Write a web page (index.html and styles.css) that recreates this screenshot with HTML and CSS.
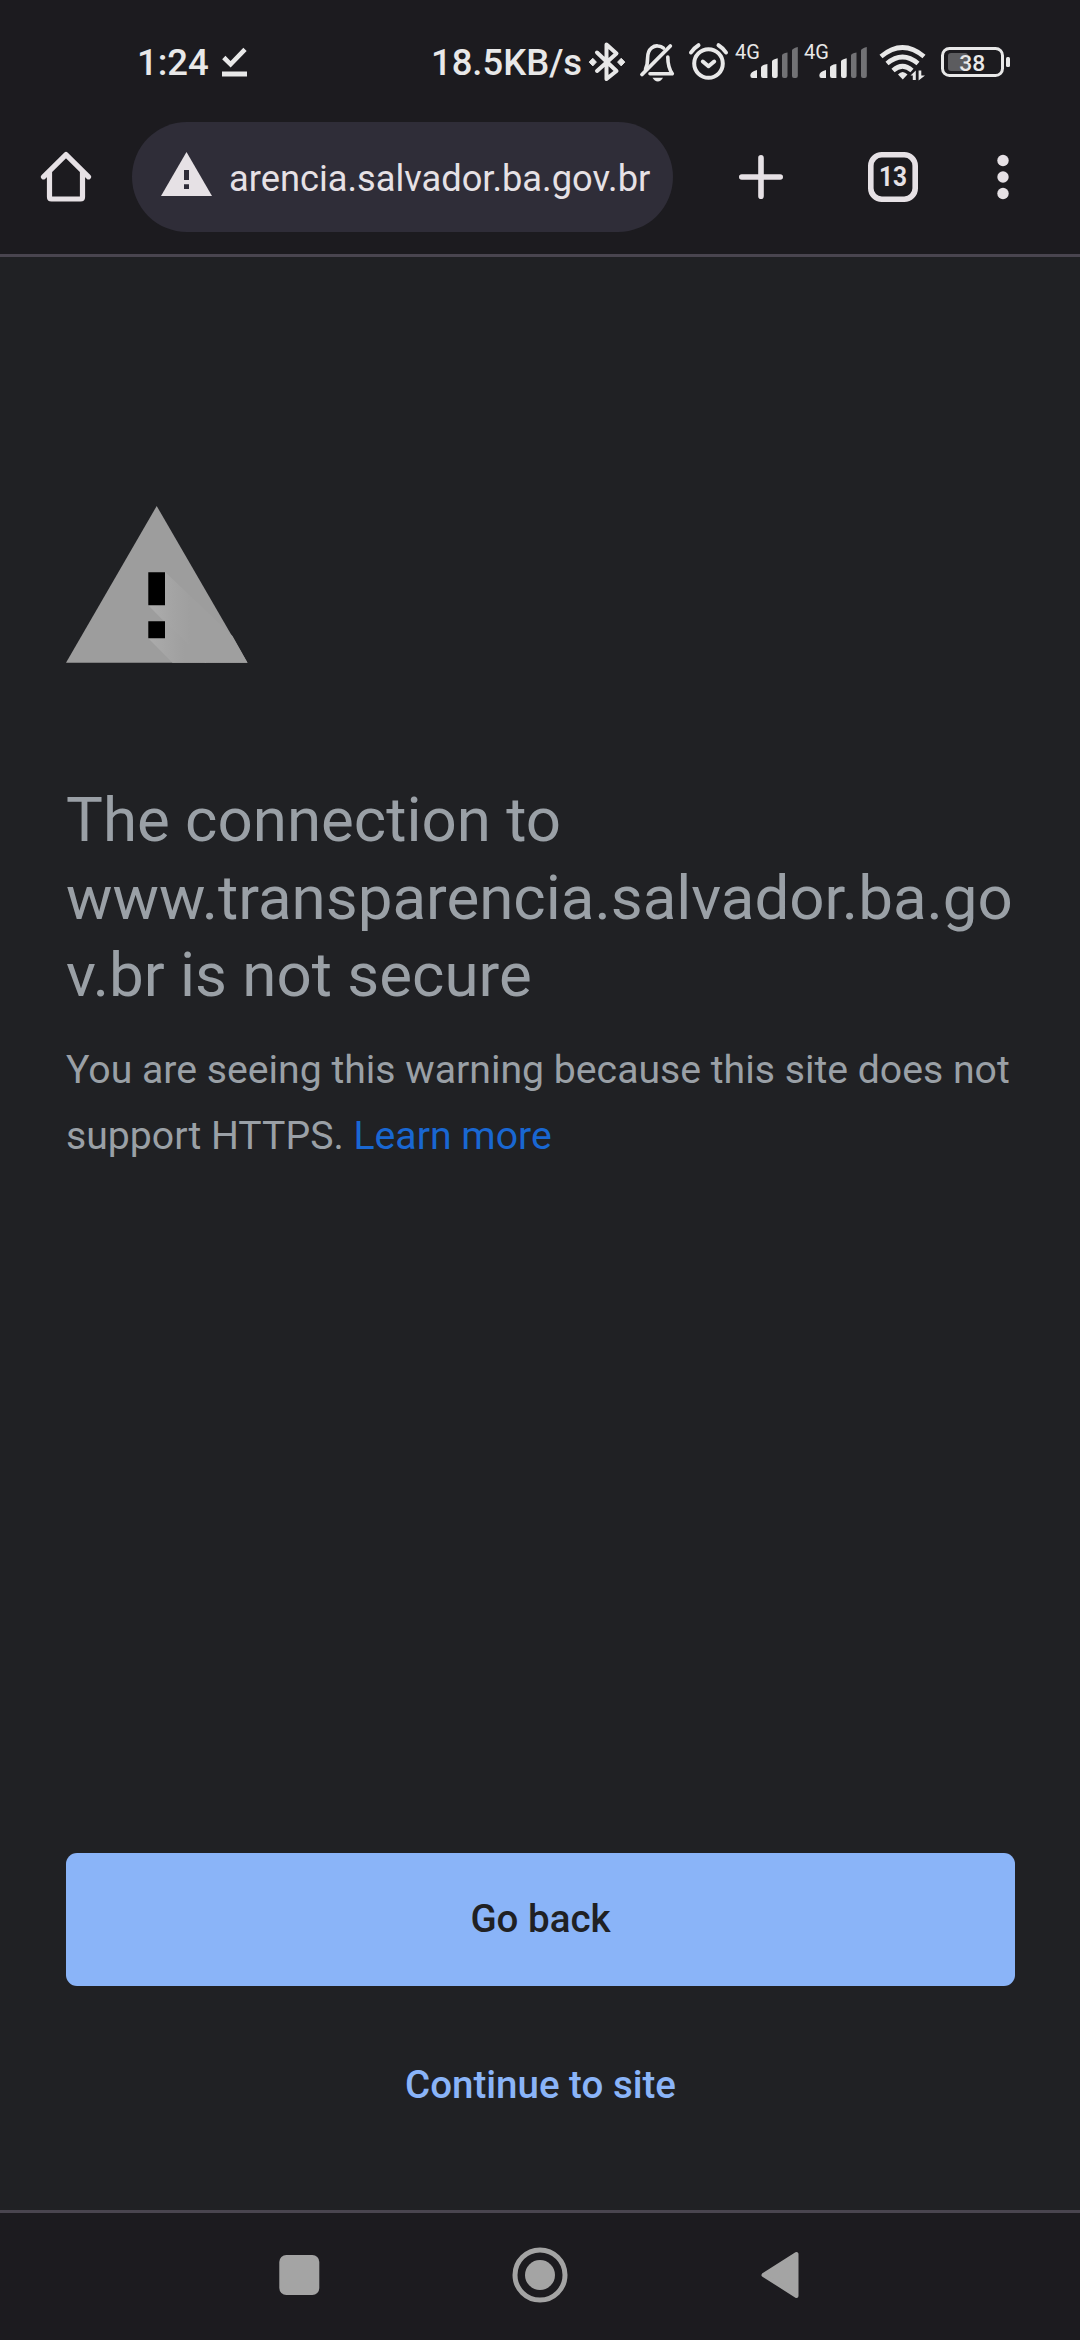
FILE: index.html
```html
<!DOCTYPE html>
<html lang="en">
<head>
<meta charset="utf-8">
<title>The connection is not secure</title>
<link rel="stylesheet" href="styles.css">
</head>
<body>
<div class="screen">
  <header class="chrome">
    <div class="status">
      <div class="status-left">
        <span class="clock">1:24</span>
        <svg class="icon" width="26" height="32" viewBox="222 46 26 32"><path d="M223.800 57.500L230.600 64.300L245 49.300" fill="none" stroke="#e8e8e8" stroke-width="4.600"/><path d="M222 71.500h25v5h-25z" fill="#e8e8e8"/></svg>
      </div>
      <div class="status-right">
        <span class="speed">18.5KB/s</span>
        <svg class="icon bluetooth" width="38" height="42" viewBox="588 41 38 42"><g fill="none" stroke="#e8e8e8" stroke-width="4" stroke-linecap="round" stroke-linejoin="round"><path d="M597 52.500L616.500 71L606.500 79V44.500L616.500 53.500L597 71"/></g><path d="M592.800 58.300l3.600 3.800-3.600 3.800-3.600-3.800zM621.200 58.300l3.600 3.800-3.600 3.800-3.600-3.800z" fill="#e8e8e8" stroke="#e8e8e8" stroke-linejoin="round"/></svg>
        <svg class="icon bell" width="37" height="40" viewBox="639 43 37 40"><path d="M645.500 69C647 66 647.600 63 647.600 58C647.600 47.500 655 45.500 658 46C660.500 46.300 662 47 663.500 48.200M667.800 57C667.800 65 669 69 672.300 73.800H650" fill="none" stroke="#e8e8e8" stroke-width="3.600" stroke-linecap="round" stroke-linejoin="round"/><path d="M642 74.500L670.300 46" stroke="#e8e8e8" stroke-width="3.800" stroke-linecap="round"/><path d="M652.500 77.800h10.500q-2 3.700-5.200 3.700t-5.300-3.700z" fill="#e8e8e8"/></svg>
        <svg class="icon alarm" width="41" height="40" viewBox="688 42 41 40"><g fill="none" stroke="#e8e8e8" stroke-width="4" stroke-linecap="round" stroke-linejoin="round"><circle cx="708.500" cy="63.500" r="14.300"/><path d="M702.800 61.500L708.500 66.300L714.200 61.500"/><path d="M691 52.500Q694 48 698.500 45.200M726 52.500Q723 48 718.500 45.200"/></g></svg>
        <div class="signal"><span class="net">4G</span><svg class="icon" width="48" height="32" viewBox="750 47 48 32"><g fill="#e8e8e8"><path d="M750.300 75.500Q750.300 71.500 757 70V78H752.500Q750.300 78 750.300 75.500zM761 67.500Q761 65 767.400 64V78H763Q761 78 761 76zM772 61.500Q772 59.500 777.700 58.300V76Q777.700 78 775.700 78H774Q772 78 772 76z"/></g><g fill="#727275"><path d="M782 55.500Q782 53.500 787.500 52.500V76Q787.500 78 785.500 78H784Q782 78 782 76zM792 50.500Q792 48.500 797.800 47V76Q797.800 78 795.800 78H794Q792 78 792 76z"/></g></svg></div>
        <div class="signal"><span class="net">4G</span><svg class="icon" width="48" height="32" viewBox="750 47 48 32"><g fill="#e8e8e8"><path d="M750.300 75.500Q750.300 71.500 757 70V78H752.500Q750.300 78 750.300 75.500zM761 67.500Q761 65 767.400 64V78H763Q761 78 761 76zM772 61.500Q772 59.500 777.700 58.300V76Q777.700 78 775.700 78H774Q772 78 772 76z"/></g><g fill="#727275"><path d="M782 55.500Q782 53.500 787.500 52.500V76Q787.500 78 785.500 78H784Q782 78 782 76zM792 50.500Q792 48.500 797.800 47V76Q797.800 78 795.800 78H794Q792 78 792 76z"/></g></svg></div>
        <svg class="icon wifi" width="47" height="38" viewBox="879 44 47 38"><g fill="none" stroke="#e8e8e8" stroke-width="4.700"><path d="M881 56.500Q902.500 38.500 924 56.500M887 63.500Q902.500 50.500 918 63.500M893 70.500Q902.500 62 912 70.500"/></g><path d="M898 74.500Q902.500 69.500 907.500 74.500L902.800 79.500z" fill="#e8e8e8"/><path d="M910.500 75.500L915.800 70.500V80H912.800V75.500zM918.600 70.500H921.300V75.500H925L918.600 80.500z" fill="#e8e8e8"/></svg>
        <svg class="icon battery" width="69" height="31" viewBox="941 47 69 31"><rect x="942.500" y="48.500" width="60" height="27" rx="7" fill="none" stroke="#e8e8e8" stroke-width="3"/><rect x="948" y="53" width="20" height="18" rx="3" fill="#5c5c5f"/><rect x="1006" y="57" width="4" height="10" rx="1.500" fill="#e8e8e8"/><text class="battery-text" x="972.300" y="70.700">38</text></svg>
      </div>
    </div>
    <div class="toolbar">
      <svg class="icon home" width="52" height="52" viewBox="40 151 52 52"><g fill="none" stroke="#e6e1e5" stroke-width="5.200" stroke-linecap="round" stroke-linejoin="round"><path d="M43.500 176.800L66 154.600L88.500 176.800"/><path d="M49.500 172V197Q49.500 199 51.500 199H80.500Q82.500 199 82.500 197V172"/></g></svg>
      <div class="omnibox">
        <svg class="icon" width="51" height="44" viewBox="161 152 51 44"><path d="M186.500 152L212 196H161z" fill="#e6e1e5"/><path d="M184 170h5v10h-5zM184 184.300h5v4.700h-5z" fill="#2f2d38"/></svg>
        <span class="url">arencia.salvador.ba.gov.br</span>
      </div>
      <svg class="icon plus" width="46" height="46" viewBox="738 154 46 46"><path d="M741.800 177H780.200M761 157.800V196.200" stroke="#e6e1e5" stroke-width="5.600" stroke-linecap="round"/></svg>
      <svg class="icon tabs" width="50" height="50" viewBox="868 152 50 50"><rect x="870.800" y="154.800" width="44.400" height="44.400" rx="11" fill="none" stroke="#e6e1e5" stroke-width="5.600"/><text class="tabs-text" x="879" y="186" textLength="28" lengthAdjust="spacingAndGlyphs">13</text></svg>
      <svg class="icon more" width="12" height="46" viewBox="997 154 12 46"><g fill="#e6e1e5"><circle cx="1003" cy="160.500" r="5.700"/><circle cx="1003" cy="177" r="5.700"/><circle cx="1003" cy="193.500" r="5.700"/></g></svg>
    </div>
  </header>
  <main class="page">
    <svg class="icon" width="182" height="157" viewBox="66 506 182 157">
      <defs>
        <linearGradient id="glow" gradientUnits="userSpaceOnUse" x1="150" y1="0" x2="190" y2="0"><stop offset="0" stop-color="#adadad"/><stop offset=".55" stop-color="#a4a4a4"/><stop offset="1" stop-color="#9f9f9f"/></linearGradient>
        <linearGradient id="glow2" gradientUnits="userSpaceOnUse" x1="150" y1="0" x2="184" y2="0"><stop offset="0" stop-color="#ababab"/><stop offset="1" stop-color="#9f9f9f"/></linearGradient>
      </defs>
      <path d="M156.700 506L247.500 662.700H66z" fill="#9d9d9d"/>
      <path d="M165 572L232.500 636L247.500 662.700H205L148 605z" fill="url(#glow)"/>
      <path d="M165 621L206.500 662.700H172.500L148 638z" fill="url(#glow2)"/>
      <path d="M148.300 572.300h16.700v33h-16.700zM148.300 621.300h16.700v17h-16.700z" fill="#000"/>
    </svg>
    <h1 class="title">The connection to www.transparencia.salvador.ba.gov.br is not secure</h1>
    <p class="text">You are seeing this warning because this site does not support HTTPS. <a class="link">Learn more</a></p>
    <div class="actions">
      <button class="btn primary">Go back</button>
      <button class="btn secondary">Continue to site</button>
    </div>
  </main>
  <footer class="nav">
    <svg class="icon" width="41" height="40" viewBox="0 0 41 40"><rect x=".3" width="40" height="40" rx="7" fill="#a4a4a4"/></svg>
    <svg class="icon nav-home" width="56" height="56" viewBox="0 0 56 56"><circle cx="28" cy="28" r="25" fill="none" stroke="#a4a4a4" stroke-width="5"/><circle cx="28" cy="28" r="15" fill="#a4a4a4"/></svg>
    <svg class="icon nav-back" width="38" height="48" viewBox="0 0 38 48"><path d="M2.500 24L35.500 3V45z" fill="#a4a4a4" stroke="#a4a4a4" stroke-width="4" stroke-linejoin="round"/></svg>
  </footer>
</div>
</body>
</html>
```
FILE: styles.css
```css
* { box-sizing: border-box; }
body { margin: 0; background: #202124; font-family: Roboto, "Liberation Sans", sans-serif; }
.screen { width: 1080px; height: 2340px; display: flex; flex-direction: column; overflow: hidden; }
.icon { display: block; flex: none; }

.chrome { height: 257px; background: #1c1b1f; border-bottom: 3px solid #49454f; }
.status { height: 122px; display: flex; justify-content: space-between; padding: 0 70px 0 137px; color: #e8e8e8; }
.status-left, .status-right { display: flex; align-items: flex-start; }
.status-left .icon { margin: 46px 0 0 12px; }
.clock, .speed { font-weight: 500; line-height: 44px; padding-top: 41px; white-space: nowrap; }
.clock { font-size: 36.5px; width: 73px; }
.speed { font-size: 36.4px; width: 157px; }
.bluetooth { margin-top: 41px; }
.bell { margin: 43px 0 0 13px; }
.alarm { margin: 42px 0 0 12px; }
.signal { display: flex; width: 69px; margin-left: 6px; }
.signal + .signal { margin-left: 0; }
.net { width: 15px; font-size: 20px; line-height: 24px; padding-top: 40px; white-space: nowrap; }
.signal .icon { margin-top: 47px; }
.wifi { margin: 44px 0 0 6px; }
.battery { margin: 47px 0 0 15px; }
.battery-text { font-size: 22.8px; font-weight: 500; fill: #e8e8e8; text-anchor: middle; }

.toolbar { height: 110px; display: flex; align-items: center; padding-left: 40px; }
.omnibox { width: 541px; height: 110px; margin-left: 40px; padding-left: 29px; border-radius: 55px; background: #2f2d38; display: flex; align-items: center; }
.omnibox .icon { margin-top: -6px; }
.url { margin-left: 17px; padding-top: 3px; font-size: 36.25px; line-height: 44px; color: #e6e1e5; white-space: nowrap; }
.plus { margin-left: 65px; }
.tabs { margin-left: 84px; }
.more { margin-left: 79px; }
.tabs-text { font-size: 28px; font-weight: 700; fill: #e6e1e5; }

.page { flex: 1; display: flex; flex-direction: column; padding: 249px 65px 0 66px; color: #9aa0a6; }
.title { margin: 119px -6px 0 0; font-size: 61.85px; font-weight: 400; line-height: 77.6px; overflow-wrap: anywhere; }
.text { margin: 22px 0 0; font-size: 39.2px; line-height: 66.2px; }
.link { color: #1967d2; }
.actions { margin-top: auto; display: flex; flex-direction: column; height: 357px; gap: 33px; }
.btn { width: 949px; height: 133px; border: 0; border-radius: 11px; padding: 0 0 2px; font: 500 38.5px/66px Roboto, "Liberation Sans", sans-serif; }
.primary { background: #8ab4f8; color: #202124; }
.secondary { background: transparent; color: #8ab4f8; }

.nav { height: 130px; border-top: 3px solid #49454f; background: #1c1b1f; display: flex; align-items: center; padding-left: 279px; }
.nav .icon { margin-top: -3px; }
.nav .nav-home { margin-left: 192px; }
.nav .nav-back { margin-left: 193px; }
```
